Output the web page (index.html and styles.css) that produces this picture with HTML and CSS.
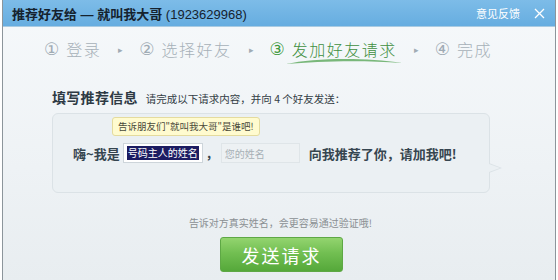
FILE: index.html
```html
<!DOCTYPE html>
<html lang="zh">
<head>
<meta charset="utf-8">
<link rel="stylesheet" href="styles.css">
</head>
<body>
<div class="frame">
  <div class="titlebar">
    <div class="title">推荐好友给 — 就叫我大哥 <span class="qq">(1923629968)</span></div>
    <div class="tools">
      <span class="feedback">意见反馈</span>
      <svg class="close" width="11" height="11" viewBox="0 0 11 11"><path d="M1 1L10 10M10 1L1 10" stroke="#fff" stroke-width="1.3" fill="none"/></svg>
    </div>
  </div>
  <div class="content">
    <div class="steps">
      <span class="num">①</span><span class="label">登录</span>
      <span class="arrow">▸</span>
      <span class="num">②</span><span class="label">选择好友</span>
      <span class="arrow">▸</span>
      <span class="num cur">③</span><span class="label cur">发加好友请求
        <svg class="swoosh" width="120" height="10" viewBox="0 0 120 10"><path d="M2 7 C 30 1, 80 0, 118 6 C 80 3, 35 4, 2 7 Z" fill="#5aa85a" opacity="0.8"/></svg></span>
      <span class="arrow">▸</span>
      <span class="num">④</span><span class="label">完成</span>
    </div>
    <div class="heading">
      <span class="h-main">填写推荐信息</span>
      <span class="h-sub">请完成以下请求内容，并向 4 个好友发送：</span>
    </div>
    <div class="bubble">
      <div class="tip">告诉朋友们"就叫我大哥"是谁吧!</div>
      <div class="line">
        <span class="say">嗨~我是</span>
        <span class="field"><span class="sel">号码主人的姓名</span></span>
        <span class="comma">，</span>
        <span class="field empty">您的姓名</span>
        <span class="say">向我推荐了你，请加我吧!</span>
      </div>
    </div>
    <div class="hint">告诉对方真实姓名，会更容易通过验证哦!</div>
    <div class="actions"><button class="send">发送请求</button></div>
  </div>
</div>
</body>
</html>
```
FILE: styles.css
```css
html, body {
  margin: 0;
  padding: 0;
  width: 558px;
  height: 280px;
  overflow: hidden;
  background: #ffffff;
}
body {
  font-family: "Liberation Sans", "Noto Sans CJK SC", sans-serif;
}
.frame {
  margin-left: 2px;
  width: 552px;
  height: 280px;
  border-left: 1px solid #8c959b;
  border-right: 1px solid #8c959b;
  display: flex;
  flex-direction: column;
  background: linear-gradient(180deg, #f6f9fb 0%, #eef2f5 60%, #e8edf0 100%);
}
.titlebar {
  height: 26px;
  flex: none;
  background: linear-gradient(180deg, #7dbce8 0%, #66ade0 100%);
  border-bottom: 1px solid #a9cbe2;
  display: flex;
  align-items: center;
  justify-content: space-between;
  padding: 0 10px 0 9px;
}
.title {
  font-size: 13px;
  font-weight: bold;
  color: #15222e;
  font-family: "Liberation Sans", "Noto Sans CJK SC", sans-serif;
}
.qq { font-weight: normal; }
.tools {
  display: flex;
  align-items: center;
  gap: 14px;
}
.feedback {
  color: #ffffff;
  font-size: 11px;
  font-family: "Noto Sans CJK SC", sans-serif;
}
.close { display: block; }
.content {
  flex: 1;
  display: flex;
  flex-direction: column;
}
.steps {
  display: flex;
  align-items: center;
  height: 24px;
  margin-top: 10px;
  padding-left: 41px;
  font-family: "Noto Sans CJK SC", sans-serif;
  font-weight: 300;
  color: #a6b0b8;
}
.num {
  font-size: 17px;
  margin-right: 7px;
  font-family: "DejaVu Sans", sans-serif;
  font-weight: normal;
  color: #a0abb4;
}
.num.cur { color: #3f9a3f; }
.label {
  font-size: 16px;
  letter-spacing: 1.5px;
  position: relative;
}
.label.cur { color: #3f8f3f; }
.arrow {
  font-size: 9px;
  margin: 0 16px 0 17px;
  color: #a0abb4;
}
.swoosh {
  position: absolute;
  left: -8px;
  top: 20px;
}
.heading {
  margin-top: 26px;
  padding-left: 49px;
  display: flex;
  align-items: baseline;
  gap: 8px;
  height: 20px;
}
.h-main {
  font-family: "Noto Sans CJK SC", sans-serif;
  font-weight: bold;
  font-size: 14px;
  letter-spacing: 0.3px;
  color: #2e3a44;
}
.h-sub {
  font-family: "Noto Sans CJK SC", sans-serif;
  font-size: 10.5px;
  color: #333d45;
}
.bubble {
  margin-top: 6px;
  margin-left: 49px;
  width: 436px;
  height: 78px;
  border: 1px solid #dbe2e6;
  border-radius: 6px;
  background: #ebf0f3;
  position: relative;
  box-sizing: content-box;
}
.bubble::before {
  content: "";
  position: absolute;
  right: -13px;
  top: 49px;
  border-style: solid;
  border-width: 5px 0 5px 13px;
  border-color: transparent transparent transparent #dbe2e6;
}
.bubble::after {
  content: "";
  position: absolute;
  right: -11px;
  top: 50px;
  border-style: solid;
  border-width: 4px 0 4px 11px;
  border-color: transparent transparent transparent #ebf0f3;
}
.tip {
  display: inline-block;
  margin-left: 59px;
  margin-top: 3px;
  height: 17px;
  line-height: 17px;
  padding: 0 5px;
  background: #fffbcf;
  border: 1px solid #e4db9e;
  border-radius: 3px;
  font-family: "Noto Sans CJK SC", sans-serif;
  font-size: 9.5px;
  color: #4a4a3a;
}
.line {
  display: flex;
  align-items: center;
  margin-top: 6px;
  padding-left: 20px;
  height: 22px;
}
.say {
  font-family: "Noto Sans CJK SC", sans-serif;
  font-weight: bold;
  font-size: 13px;
  color: #36454f;
  white-space: nowrap;
}
.field {
  margin-left: 3px;
  width: 80px;
  height: 20px;
  box-sizing: border-box;
  border: 1px solid #cdd5da;
  background: #ffffff;
  display: flex;
  align-items: center;
  padding-left: 3px;
  font-family: "Noto Sans CJK SC", sans-serif;
  font-size: 10px;
  white-space: nowrap;
  overflow: hidden;
}
.sel {
  background: #1c1c62;
  color: #ffffff;
  line-height: 14px;
  padding: 0 1px;
}
.comma {
  font-family: "Noto Sans CJK SC", sans-serif;
  font-weight: bold;
  font-size: 12px;
  color: #36454f;
  width: 18px;
  text-align: center;
}
.field.empty {
  margin-left: 0;
  width: 79px;
  background: #edf1f3;
  border-color: #dfe5e8;
  color: #a7b0b6;
  margin-right: 9px;
}
.hint {
  margin-top: 23px;
  text-align: center;
  padding-left: 3px;
  font-family: "Noto Sans CJK SC", sans-serif;
  font-size: 10px;
  color: #8a8f93;
  height: 14px;
  line-height: 14px;
}
.actions {
  display: flex;
  justify-content: center;
  padding-left: 5px;
  margin-top: 7px;
}
.send {
  width: 123px;
  height: 35px;
  border: 1px solid #5ea845;
  border-radius: 3px;
  background: linear-gradient(180deg, #93d46f 0%, #72bf52 45%, #55a83a 100%);
  color: #ffffff;
  font-family: "Noto Sans CJK SC", sans-serif;
  font-size: 18px;
  letter-spacing: 2px;
  padding: 0;
  cursor: pointer;
}
```
